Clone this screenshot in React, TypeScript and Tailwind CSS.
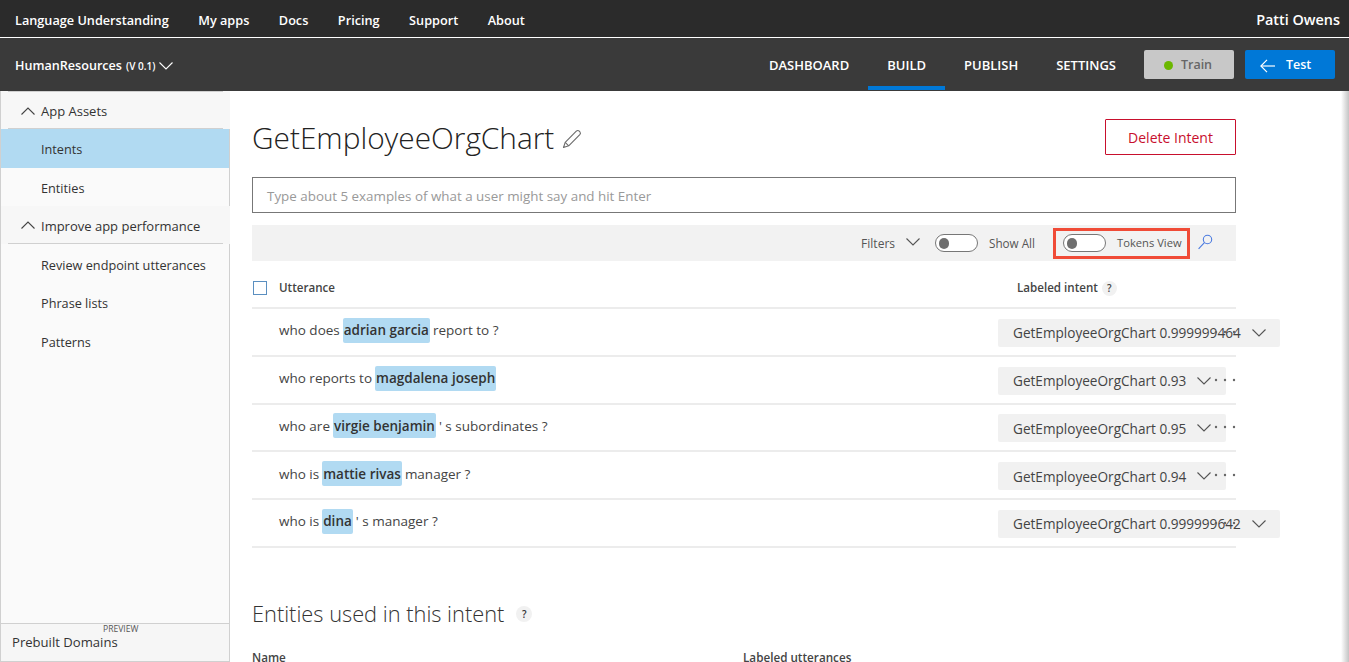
const topLinks = ["My apps", "Docs", "Pricing", "Support", "About"];
const tabs = ["DASHBOARD", "BUILD", "PUBLISH", "SETTINGS"];

type Utterance = {
  before: string;
  entity: string;
  after: string;
  score: string;
  wide?: boolean;
};

const utterances: Utterance[] = [
  { before: "who does", entity: "adrian garcia", after: "report to ?", score: "0.999999464", wide: true },
  { before: "who reports to", entity: "magdalena joseph", after: "", score: "0.93" },
  { before: "who are", entity: "virgie benjamin", after: "' s subordinates ?", score: "0.95" },
  { before: "who is", entity: "mattie rivas", after: "manager ?", score: "0.94" },
  { before: "who is", entity: "dina", after: "' s manager ?", score: "0.999999642", wide: true },
];

function Chevron({ up, className }: { up?: boolean; className?: string }) {
  return (
    <svg width="14" height="8" viewBox="0 0 14 8" fill="none" stroke="currentColor" strokeWidth="1.1" className={className}>
      <polyline points={up ? "0.5,7.5 7,1 13.5,7.5" : "0.5,0.5 7,7 13.5,0.5"} />
    </svg>
  );
}

function Toggle() {
  return (
    <span className="flex h-[18px] w-[43px] shrink-0 items-center rounded-full border border-[#777] bg-white pl-[3px]">
      <span className="h-[11px] w-[10px] rounded-full bg-[#6f6f6f]" />
    </span>
  );
}

function SideHeader({ label, first }: { label: string; first?: boolean }) {
  return (
    <div className="-mr-[1px] h-[38px] bg-[#f7f7f7] pl-[7px] pr-[7px]">
      <div className={`flex h-full items-center gap-[6px] border-b border-[#d0d0d0] pl-[13px] pt-[4px] text-[13px] text-[#333] ${first ? "border-t" : ""}`}>
        <Chevron up className="mb-[3px] text-[#444]" />
        <span>{label}</span>
      </div>
    </div>
  );
}

function SideItem({ label, active }: { label: string; active?: boolean }) {
  return (
    <div className={`flex h-[38.7px] items-center pl-[40px] pt-[3px] text-[12.7px] text-[#333] ${active ? "bg-[#b1daf2]" : ""}`}>
      {label}
    </div>
  );
}

function Row({ u }: { u: Utterance }) {
  return (
    <div className="flex h-[47.8px] items-center border-b-2 border-[#ececec] text-[#444]">
      <div className="flex w-[746px] shrink-0 items-center gap-[3px] pb-[3px] pl-[27px] text-[13.5px]">
        <span>{u.before}</span>
        <span className="flex h-[25px] items-center rounded-[2px] bg-[#b1daf2] px-[1px] font-semibold text-[#333]">{u.entity}</span>
        <span>{u.after}</span>
      </div>
      <div className={`relative mt-[2px] flex h-[28px] shrink-0 items-center rounded-[2px] bg-[#f1f1f1] pl-[15px] pt-[1px] text-[13.6px] text-[#444] ${u.wide ? "w-[282px]" : "w-[228px]"}`}>
        <span className="whitespace-nowrap">GetEmployeeOrgChart {u.score}</span>
        <Chevron className={`absolute top-[10px] text-[#555] ${u.wide ? "left-[254px]" : "left-[199px]"}`} />
        <svg width="24" height="4" viewBox="0 0 24 4" className="absolute left-[216px] top-[11px] text-[#666]" fill="currentColor">
          <circle cx="2" cy="2" r="1.2" />
          <circle cx="11" cy="2" r="1.2" />
          <circle cx="20" cy="2" r="1.2" />
        </svg>
      </div>
    </div>
  );
}

export default function App() {
  return (
    <div className="flex h-[662px] w-full flex-col overflow-hidden bg-white font-['Open_Sans',sans-serif]">
      <header className="flex h-[38px] shrink-0 items-center justify-between border-b border-white bg-[#2b2b2b] pl-[15px] pr-[9px] pt-[3px] font-semibold text-white">
        <nav className="flex items-center gap-[29.5px] pt-[1px] text-[12.7px]">
          <span>Language Understanding</span>
          {topLinks.map((l) => (
            <span key={l}>{l}</span>
          ))}
        </nav>
        <span className="text-[14.4px]">Patti Owens</span>
      </header>

      <div className="flex h-[53px] shrink-0 items-center justify-between bg-[#3a3a3a] pl-[15px] pr-[14px] text-white">
        <div className="flex items-center gap-[4px] pt-[4px] font-semibold">
          <span className="text-[12.6px]">HumanResources</span>
          <span className="text-[10px]">(V 0.1)</span>
          <Chevron />
        </div>
        <div className="flex h-full items-center">
          <nav className="mr-[9px] flex h-[52px] items-stretch self-start text-[13px] font-semibold">
            {tabs.map((t) => (
              <span
                key={t}
                className={`flex items-center border-b-[4px] px-[19px] pt-[8px] ${t === "BUILD" ? "border-[#0078d7]" : "border-transparent"}`}
              >
                {t}
              </span>
            ))}
          </nav>
          <button className="mr-[11px] flex h-[29px] w-[90px] items-center justify-center gap-[8px] rounded-[2px] bg-[#c8c8c8] pr-[2px] pt-[2px] text-[12.5px] font-semibold text-[#666]">
            <span className="h-[9px] w-[9px] rounded-full bg-[#6bb700]" />
            Train
          </button>
          <button className="flex h-[29px] w-[90px] items-center gap-[11px] rounded-[2px] bg-[#0078d7] pl-[15px] pt-[2px] text-[12.5px] font-semibold text-white">
            <svg width="15" height="14" viewBox="0 0 15 14" fill="none" stroke="currentColor" strokeWidth="1.2">
              <polyline points="7,0.8 0.9,7 7,13.2" />
              <line x1="1" y1="7" x2="15" y2="7" />
            </svg>
            Test
          </button>
        </div>
      </div>

      <div className="flex min-h-0 flex-1">
        <aside className="flex w-[230px] shrink-0 flex-col border-x border-[#d0d0d0] bg-[#fafafa]">
          <div className="flex-1">
            <SideHeader label="App Assets" first />
            <SideItem label="Intents" active />
            <SideItem label="Entities" />
            <SideHeader label="Improve app performance" />
            <SideItem label="Review endpoint utterances" />
            <SideItem label="Phrase lists" />
            <SideItem label="Patterns" />
          </div>
          <div className="h-[39px] border-y border-[#d0d0d0] bg-[#f6f6f6] pl-[11px] text-[#333]">
            <div className="pl-[91px] text-[8.6px] leading-[11px] text-[#555]">PREVIEW</div>
            <div className="text-[13.1px] leading-[15px]">Prebuilt Domains</div>
          </div>
        </aside>

        <main className="min-w-0 flex-1 pl-[22px]">
          <div className="w-[984px]">
            <div className="flex h-[86px] items-center justify-between pt-[5px]">
              <div className="mt-[4px] flex items-center gap-[8px]">
                <h1 className="text-[29.8px] font-light text-[#222]">GetEmployeeOrgChart</h1>
                <svg width="20" height="20" viewBox="0 0 20 20" fill="none" stroke="#6b6b6b" strokeWidth="1.1" strokeLinejoin="round">
                  <path d="M1.5 18.5 L3.2 13.3 L14.3 2.2 Q15.8 0.9 17.3 2.2 L18 3 Q19 4.4 17.8 5.7 L6.7 16.8 Z" />
                  <line x1="3.2" y1="13.3" x2="6.7" y2="16.8" />
                </svg>
              </div>
              <button className="h-[36px] w-[131px] rounded-[1px] border border-[#c80f2d] pt-[1px] text-[14px] font-medium text-[#c80f2d]">
                Delete Intent
              </button>
            </div>

            <div className="flex h-[36px] items-center border border-[#777] pl-[14px] pt-[3px] text-[13.4px] text-[#999]">
              Type about 5 examples of what a user might say and hit Enter
            </div>

            <div className="mt-[12px] flex h-[36px] items-center justify-end bg-[#f2f2f2] pr-[22px] text-[#555]">
              <span className="mr-[11px] pt-[2px] text-[12px]">Filters</span>
              <Chevron className="mr-[15px] mt-[-3px]" />
              <Toggle />
              <span className="ml-[11px] mr-[18px] pt-[2px] text-[11.7px]">Show All</span>
              <div className="mr-[8px] flex h-[31px] w-[137px] items-center gap-[11px] border-[3px] border-[#f04b37] pl-[7px]">
                <Toggle />
                <span className="whitespace-nowrap pt-[1px] text-[11.2px]">Tokens View</span>
              </div>
              <svg width="16" height="17" viewBox="0 0 16 17" fill="none" stroke="#4a7ae0" strokeWidth="1.1" className="mb-[3px]">
                <circle cx="9.5" cy="6.5" r="4.2" />
                <line x1="6.4" y1="9.6" x2="0.6" y2="15.8" />
              </svg>
            </div>

            <div className="flex h-[48px] items-center border-b-2 border-[#ececec] pt-[8px] text-[11.6px] font-semibold text-[#444]">
              <div className="flex w-[765px] items-center">
                <span className="ml-[1px] mr-[12px] h-[14px] w-[14px] border-[1.5px] border-[#5b8fc0] bg-white" />
                Utterance
              </div>
              <span>Labeled intent</span>
              <span className="ml-[4px] flex h-[15px] w-[15px] items-center justify-center rounded-full bg-[#f1f1f1] text-[10px]">?</span>
            </div>

            {utterances.map((u) => (
              <Row key={u.entity} u={u} />
            ))}

            <div className="mt-[50px] flex items-center text-[21.8px] font-light text-[#333]">
              Entities used in this intent
              <span className="ml-[12px] flex h-[16px] w-[16px] items-center justify-center rounded-full bg-[#f1f1f1] text-[10px] font-semibold">?</span>
            </div>

            <div className="mt-[18px] flex text-[11.7px] font-semibold text-[#444]">
              <span className="w-[491px]">Name</span>
              <span>Labeled utterances</span>
            </div>
          </div>
        </main>

        <div className="w-[8px] shrink-0 bg-linear-to-r from-white to-[#c4c4c4]" />
      </div>
    </div>
  );
}
